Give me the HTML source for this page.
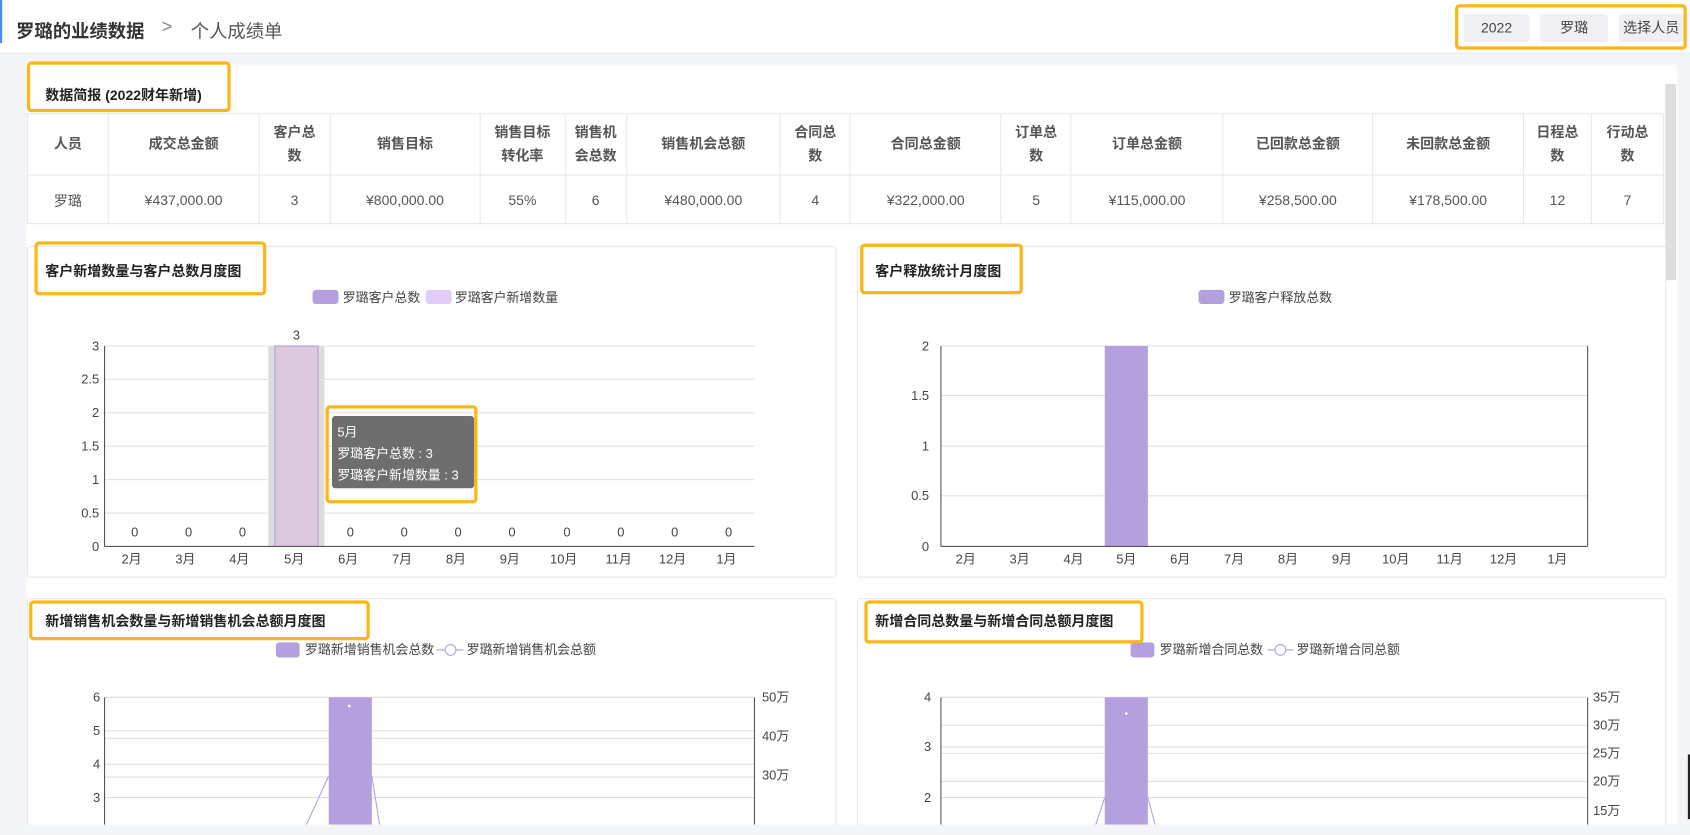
<!DOCTYPE html>
<html><head><meta charset="utf-8">
<style>
*{margin:0;padding:0;box-sizing:border-box}
body{width:1690px;height:829px;overflow:hidden;background:#f3f5f9;font-family:"Liberation Sans","Noto Sans CJK SC",sans-serif;color:#333;position:relative}
#root{position:absolute;left:0;top:0;width:1568px;height:770px;transform:scale(1.07781);transform-origin:0 0}
.abs{position:absolute}
.hdr{left:0;top:0;width:1568px;height:50px;background:#fff;border-bottom:1px solid #e8eaef}
.yb{position:absolute;border:3px solid #fcb714;border-radius:4px}
.btn{position:absolute;top:13px;height:26px;background:#eef0f4;border-radius:3px;font-size:13px;color:#444;text-align:center;line-height:26px}
table{border-collapse:collapse;font-size:13px;color:#555}
td{border:1px solid #e8e8e8;text-align:center}
th{border:1px solid #e8e8e8;text-align:center;font-weight:bold;color:#555;line-height:22px}
.card{position:absolute;background:#fff;border:1px solid #e6e8ec;border-radius:3px}
.ct{position:absolute;font-size:13px;font-weight:bold;color:#222}
svg text{font-family:"Liberation Sans","Noto Sans CJK SC",sans-serif;font-size:12px;fill:#444}
</style></head><body><div id="root">
<div class="abs hdr"></div>
<div class="abs" style="left:0;top:0;width:2px;height:40px;background:#4a8af4"></div>
<div class="abs" style="left:15px;top:15px;font-size:17px;font-weight:bold;color:#333">罗璐的业绩数据</div>
<div class="abs" style="left:150px;top:15px;font-size:17px;color:#888">&gt;</div>
<div class="abs" style="left:177px;top:15px;font-size:17px;color:#555">个人成绩单</div>
<div class="btn" style="left:1358px;width:61px">2022</div>
<div class="btn" style="left:1429px;width:63px">罗璐</div>
<div class="btn" style="left:1502px;width:60px">选择人员</div>
<div class="yb" style="left:1350px;top:4px;width:215px;height:42px"></div>

<div class="abs" style="left:25px;top:60px;width:1531px;height:705px;background:#fff"></div>
<div class="abs" style="left:1545px;top:78px;width:10px;height:182px;background:#dedede"></div>
<div class="abs" style="left:42px;top:78px;font-size:13px;font-weight:bold;color:#222">数据简报 (2022财年新增)</div>
<div class="yb" style="left:25px;top:57px;width:189px;height:47px"></div>

<table class="abs" style="left:25px;top:105px;width:1519px">
<tr style="height:57px"><th style="width:75px">人员</th><th style="width:140px">成交总金额</th><th style="width:66px">客户总<br>数</th><th style="width:139px">销售目标</th><th style="width:79px">销售目标<br>转化率</th><th style="width:57px">销售机<br>会总数</th><th style="width:143px">销售机会总额</th><th style="width:65px">合同总<br>数</th><th style="width:140px">合同总金额</th><th style="width:65px">订单总<br>数</th><th style="width:141px">订单总金额</th><th style="width:139px">已回款总金额</th><th style="width:140px">未回款总金额</th><th style="width:63px">日程总<br>数</th><th style="width:67px">行动总<br>数</th></tr>
<tr style="height:45px"><td>罗璐</td><td>¥437,000.00</td><td>3</td><td>¥800,000.00</td><td>55%</td><td>6</td><td>¥480,000.00</td><td>4</td><td>¥322,000.00</td><td>5</td><td>¥115,000.00</td><td>¥258,500.00</td><td>¥178,500.00</td><td>12</td><td>7</td></tr>
</table>

<div class="card" style="left:25px;top:228px;width:751px;height:308px"></div>
<div class="card" style="left:795px;top:228px;width:751px;height:308px"></div>
<div class="card" style="left:25px;top:555px;width:751px;height:215px"></div>
<div class="card" style="left:795px;top:555px;width:751px;height:215px"></div>

<svg class="abs" style="left:0;top:0" width="1568" height="770">
<g>
<rect x="290" y="269" width="24" height="13" rx="3" fill="#b4a0de"/><text x="318" y="280" font-size="11">罗璐客户总数</text>
<rect x="395" y="269" width="24" height="13" rx="3" fill="#e2cdf8"/><text x="422" y="280" font-size="11">罗璐客户新增数量</text>
<rect x="249" y="321" width="52" height="186" fill="#dcdcdc"/>
<g stroke="#e0e0e0"><line x1="97" y1="321" x2="700" y2="321"/><line x1="97" y1="352" x2="700" y2="352"/><line x1="97" y1="383" x2="700" y2="383"/><line x1="97" y1="414" x2="700" y2="414"/><line x1="97" y1="445" x2="700" y2="445"/><line x1="97" y1="476" x2="700" y2="476"/></g>
<rect x="255" y="321" width="40" height="186" fill="#dcc8df" stroke="#b4a0de"/>
<line x1="97" y1="321" x2="97" y2="507" stroke="#555"/><line x1="97" y1="507" x2="700" y2="507" stroke="#555"/>
<g text-anchor="end"><text x="92" y="325">3</text><text x="92" y="356">2.5</text><text x="92" y="387">2</text><text x="92" y="418">1.5</text><text x="92" y="449">1</text><text x="92" y="480">0.5</text><text x="92" y="511">0</text></g>
<g text-anchor="middle"><text x="275" y="315">3</text>
<text x="125" y="498">0</text><text x="175" y="498">0</text><text x="225" y="498">0</text><text x="325" y="498">0</text><text x="375" y="498">0</text><text x="425" y="498">0</text><text x="475" y="498">0</text><text x="526" y="498">0</text><text x="576" y="498">0</text><text x="626" y="498">0</text><text x="676" y="498">0</text>
<text x="122" y="523">2月</text><text x="172" y="523">3月</text><text x="222" y="523">4月</text><text x="273" y="523">5月</text><text x="323" y="523">6月</text><text x="373" y="523">7月</text><text x="423" y="523">8月</text><text x="473" y="523">9月</text><text x="523" y="523">10月</text><text x="574" y="523">11月</text><text x="624" y="523">12月</text><text x="674" y="523">1月</text></g>
<rect x="308" y="386" width="132" height="67" rx="3" fill="#6e6e6e"/>
<text x="313" y="405" style="fill:#fff">5月</text><text x="313" y="425" style="fill:#fff">罗璐客户总数 : 3</text><text x="313" y="445" style="fill:#fff">罗璐客户新增数量 : 3</text>
</g>
<g>
<rect x="1112" y="269" width="24" height="13" rx="3" fill="#b4a0de"/><text x="1140" y="280" font-size="11">罗璐客户释放总数</text>
<g stroke="#e0e0e0"><line x1="873" y1="321" x2="1473" y2="321"/><line x1="873" y1="367" x2="1473" y2="367"/><line x1="873" y1="414" x2="1473" y2="414"/><line x1="873" y1="460" x2="1473" y2="460"/></g>
<rect x="1025" y="321" width="40" height="186" fill="#b4a0de"/>
<line x1="873" y1="321" x2="873" y2="507" stroke="#555"/><line x1="1473" y1="321" x2="1473" y2="507" stroke="#555"/><line x1="873" y1="507" x2="1473" y2="507" stroke="#555"/>
<g text-anchor="end"><text x="862" y="325">2</text><text x="862" y="371">1.5</text><text x="862" y="418">1</text><text x="862" y="464">0.5</text><text x="862" y="511">0</text></g>
<g text-anchor="middle"><text x="896" y="523">2月</text><text x="946" y="523">3月</text><text x="996" y="523">4月</text><text x="1045" y="523">5月</text><text x="1095" y="523">6月</text><text x="1145" y="523">7月</text><text x="1195" y="523">8月</text><text x="1245" y="523">9月</text><text x="1295" y="523">10月</text><text x="1345" y="523">11月</text><text x="1395" y="523">12月</text><text x="1445" y="523">1月</text></g>
</g>
<g>
<rect x="256" y="596" width="22" height="14" rx="3" fill="#b4a0de"/><text x="283" y="607" font-size="11">罗璐新增销售机会总数</text>
<line x1="405" y1="603" x2="430" y2="603" stroke="#b4a0de"/><circle cx="418" cy="603" r="5" fill="#fff" stroke="#b4a0de"/><text x="433" y="607" font-size="11">罗璐新增销售机会总额</text>
<g stroke="#e0e0e0"><line x1="97" y1="647" x2="700" y2="647"/><line x1="97" y1="678" x2="700" y2="678"/><line x1="97" y1="685" x2="700" y2="685"/><line x1="97" y1="709" x2="700" y2="709"/><line x1="97" y1="721" x2="700" y2="721"/><line x1="97" y1="740" x2="700" y2="740"/></g>
<rect x="305" y="647" width="40" height="120" fill="#b4a0de"/><circle cx="324" cy="655" r="1.2" fill="#fff"/>
<path d="M282 770 L305 720 M345 720 L353 770" stroke="#b4a0de" fill="none"/>
<line x1="97" y1="647" x2="97" y2="770" stroke="#555"/><line x1="700" y1="647" x2="700" y2="770" stroke="#555"/>
<g text-anchor="end"><text x="93" y="651">6</text><text x="93" y="682">5</text><text x="93" y="713">4</text><text x="93" y="744">3</text></g>
<text x="707" y="651">50万</text><text x="707" y="687">40万</text><text x="707" y="723">30万</text>
</g>
<g>
<rect x="1049" y="596" width="22" height="14" rx="3" fill="#b4a0de"/><text x="1076" y="607" font-size="11">罗璐新增合同总数</text>
<line x1="1176" y1="603" x2="1200" y2="603" stroke="#b4a0de"/><circle cx="1188" cy="603" r="5" fill="#fff" stroke="#b4a0de"/><text x="1203" y="607" font-size="11">罗璐新增合同总额</text>
<g stroke="#e0e0e0"><line x1="873" y1="647" x2="1473" y2="647"/><line x1="873" y1="673" x2="1473" y2="673"/><line x1="873" y1="693" x2="1473" y2="693"/><line x1="873" y1="699" x2="1473" y2="699"/><line x1="873" y1="725" x2="1473" y2="725"/><line x1="873" y1="740" x2="1473" y2="740"/></g>
<rect x="1025" y="647" width="40" height="120" fill="#b4a0de"/><circle cx="1045" cy="662" r="1.2" fill="#fff"/>
<path d="M1015 770 L1025 740 M1065 740 L1073 770" stroke="#b4a0de" fill="none"/>
<line x1="873" y1="647" x2="873" y2="770" stroke="#555"/><line x1="1473" y1="647" x2="1473" y2="770" stroke="#555"/>
<g text-anchor="end"><text x="864" y="651">4</text><text x="864" y="697">3</text><text x="864" y="744">2</text></g>
<text x="1478" y="651">35万</text><text x="1478" y="677">30万</text><text x="1478" y="703">25万</text><text x="1478" y="729">20万</text><text x="1478" y="756">15万</text>
</g>
</svg>
<div class="abs" style="left:0;top:765px;width:1568px;height:10px;background:#f3f5f9"></div>
<div class="abs" style="left:1566px;top:700px;width:2px;height:60px;background:#222"></div>

<div class="ct" style="left:42px;top:241px">客户新增数量与客户总数月度图</div>
<div class="yb" style="left:32px;top:224px;width:215px;height:50px"></div>
<div class="ct" style="left:812px;top:241px">客户释放统计月度图</div>
<div class="yb" style="left:798px;top:226px;width:151px;height:47px"></div>
<div class="yb" style="left:302px;top:376px;width:141px;height:91px"></div>
<div class="ct" style="left:42px;top:566px">新增销售机会数量与新增销售机会总额月度图</div>
<div class="yb" style="left:27px;top:557px;width:316px;height:37px"></div>
<div class="ct" style="left:812px;top:566px">新增合同总数量与新增合同总额月度图</div>
<div class="yb" style="left:802px;top:557px;width:259px;height:40px"></div>
</div></body></html>
